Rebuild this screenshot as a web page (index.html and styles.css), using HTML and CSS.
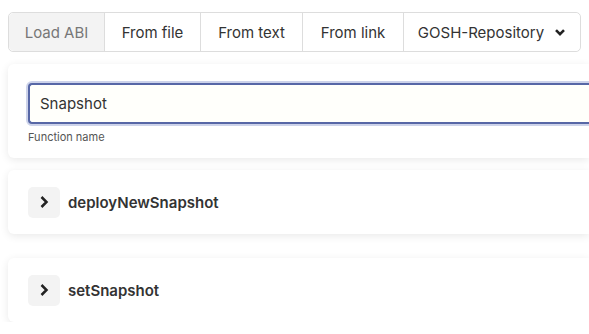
FILE: index.html
```html
<!DOCTYPE html>
<html lang="en">
<head>
    <meta charset="UTF-8">
    <meta name="viewport" content="width=device-width, initial-scale=1.0">
    <title>ABI Functions</title>
    <link rel="stylesheet" href="styles.css">
</head>
<body>
    <main class="page">
        <nav class="tabs">
            <button class="tab tab-active">Load ABI</button>
            <button class="tab">From file</button>
            <button class="tab">From text</button>
            <button class="tab">From link</button>
            <button class="tab tab-select">
                GOSH-Repository
                <svg class="caret" width="12" height="9" viewBox="0 0 12 9">
                    <path d="M2 2.2 L6 6.2 L10 2.2" fill="none" stroke="#222" stroke-width="2.6"/>
                </svg>
            </button>
        </nav>

        <section class="card search-card">
            <input class="search-input" type="text" value="Snapshot">
            <div class="hint">Function name</div>
        </section>

        <section class="card fn-card">
            <span class="toggle">
                <svg width="12" height="14" viewBox="0 0 12 14">
                    <path d="M3.5 2 L8.5 7 L3.5 12" fill="none" stroke="#222" stroke-width="2.5"/>
                </svg>
            </span>
            <span class="fn-name">deployNewSnapshot</span>
        </section>

        <section class="card fn-card">
            <span class="toggle">
                <svg width="12" height="14" viewBox="0 0 12 14">
                    <path d="M3.5 2 L8.5 7 L3.5 12" fill="none" stroke="#222" stroke-width="2.5"/>
                </svg>
            </span>
            <span class="fn-name">setSnapshot</span>
        </section>
    </main>
</body>
</html>
```

FILE: styles.css
```css
html, body {
    margin: 0;
    padding: 0;
    background: #fff;
    overflow: hidden;
}

body {
    font-family: 'Inter', 'Noto Sans', sans-serif;
    color: #333;
}

.page {
    padding: 12px 0 0 8px;
}

.tabs {
    display: flex;
    width: 573px;
    height: 40px;
    border: 1px solid #ddd;
    border-radius: 5px;
    box-sizing: border-box;
}

.tab {
    font-family: inherit;
    font-size: 15px;
    color: #333;
    background: #fff;
    border: none;
    border-right: 1px solid #ddd;
    padding: 0;
    display: flex;
    align-items: center;
    justify-content: center;
}

.tab:nth-child(1) { width: 96px; }
.tab:nth-child(2) { width: 96px; }
.tab:nth-child(3) { width: 102px; }
.tab:nth-child(4) { width: 101px; }

.tab-active {
    background: #f3f3f3;
    color: #777;
    border-radius: 5px 0 0 5px;
}

.tab-select {
    flex: 1;
    border-right: none;
    border-radius: 0 5px 5px 0;
    gap: 10px;
}

.caret {
    margin-top: 1px;
}

/* cards run off the right edge of the window */
.card {
    background: #fff;
    border-radius: 6px 0 0 6px;
    box-shadow: 0 2px 8px rgba(0, 0, 0, 0.09);
    box-sizing: border-box;
    overflow: hidden;
}

.search-card {
    margin-top: 12px;
    height: 94px;
    padding: 19px 0 0 20px;
}

.search-input {
    display: block;
    width: 100%;
    height: 41px;
    box-sizing: border-box;
    font-family: inherit;
    font-size: 15px;
    color: #333;
    background: #fffffb;
    border: 2px solid #5767a6;
    border-right: none;
    border-radius: 4px 0 0 4px;
    box-shadow: 0 0 0 2px #cdd3ea;
    padding: 0 10px;
    outline: none;
}

.hint {
    font-size: 11px;
    color: #555;
    margin-top: 6px;
}

.fn-card {
    display: flex;
    align-items: center;
    height: 64px;
    padding: 0 20px;
    gap: 8px;
    margin-top: 12px;
}

.fn-card + .fn-card {
    margin-top: 24px;
}

.toggle {
    width: 32px;
    height: 31px;
    background: #f3f3f3;
    border-radius: 5px;
    display: flex;
    align-items: center;
    justify-content: center;
}

.fn-name {
    font-size: 15px;
    font-weight: 600;
    color: #333;
}
```
